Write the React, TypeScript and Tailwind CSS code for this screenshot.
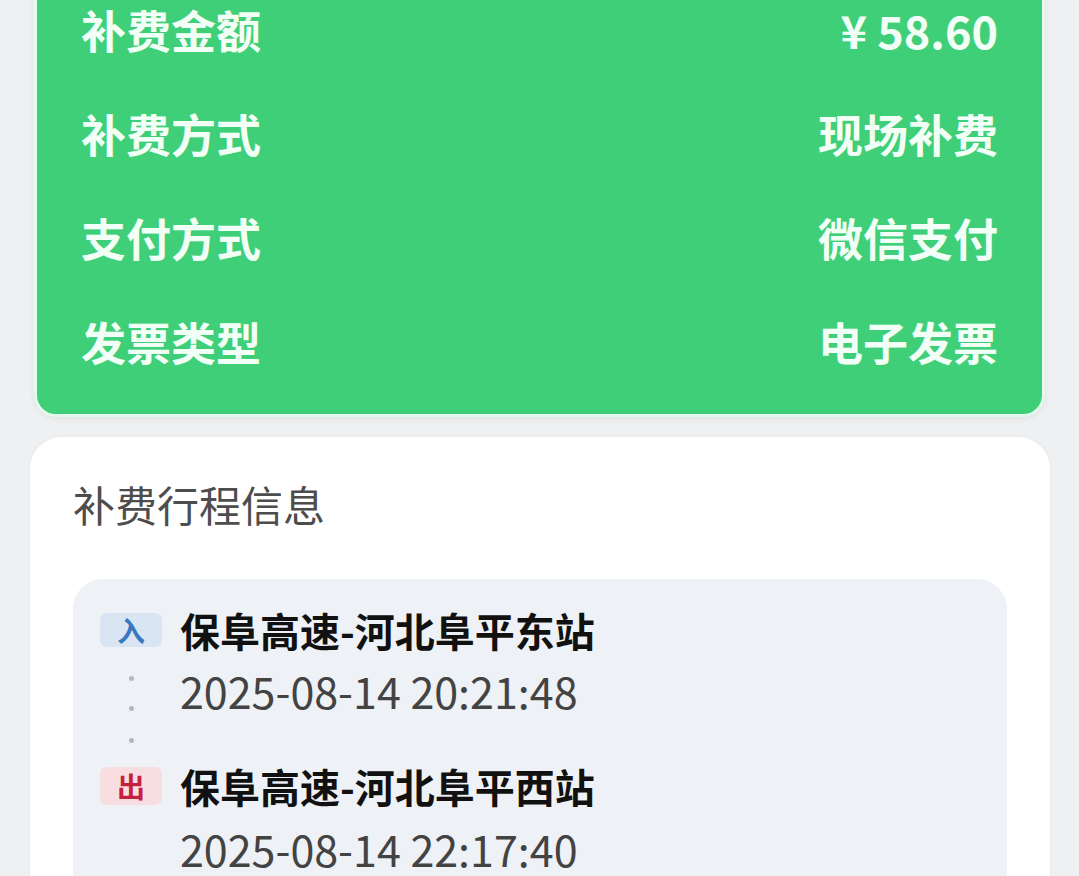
import React from "react";

const cjk = { fontFamily: '"Noto Sans CJK SC", "Noto Sans", sans-serif' };

const rows = [
  { label: "补费金额", value: "¥ 58.60" },
  { label: "补费方式", value: "现场补费" },
  { label: "支付方式", value: "微信支付" },
  { label: "发票类型", value: "电子发票" },
];

function Dot() {
  return <div className="w-[5px] h-[5px] rounded-full bg-[#b4b8bd]" />;
}

export default function App() {
  return (
    <div className="min-h-screen bg-[#eef0f2] overflow-hidden" style={cjk}>
      <div className="mx-[34px] -mt-[60px] pt-[34px] pb-[21px] px-[44px] bg-[#3fcf79] rounded-[22px] border-[3px] border-[#e4f8ee] shadow-[0_2px_6px_rgba(0,0,0,0.06)]">
        {rows.map((r) => (
          <div key={r.label} className="h-[104px] flex items-center justify-between text-[45px] font-bold text-[#f2fff6] leading-none">
            <span>{r.label}</span>
            <span>{r.value}</span>
          </div>
        ))}
      </div>

      <div className="mt-[20px] ml-[30px] mr-[29px] bg-white rounded-[32px] pt-[37px] px-[43px] pb-[40px] shadow-[0_0_4px_rgba(0,0,0,0.04)]">
        <div className="h-[60px] flex items-center text-[42px] text-[#4d4d4d] leading-none">补费行程信息</div>

        <div className="mt-[45px] bg-[#eef1f5] rounded-[30px] pt-[21px] pl-[27px] pr-[30px] pb-[30px]">
          <div className="flex items-center h-[60px]">
            <div className="w-[62px] h-[34px] rounded-[7px] bg-[#d9e5f3] flex items-center justify-center text-[28px] font-semibold text-[#3a78c2] leading-none">入</div>
            <div className="ml-[18px] text-[40px] font-bold text-[#111] leading-none">保阜高速-河北阜平东站</div>
          </div>
          <div className="flex items-center h-[60px]">
            <div className="w-[62px] h-[60px] flex flex-col items-center pt-[16px] gap-[25px]">
              <Dot />
              <Dot />
            </div>
            <div className="ml-[18px] text-[43px] text-[#434343] leading-none">2025-08-14 20:21:48</div>
          </div>
          <div className="flex h-[36px]">
            <div className="w-[62px] flex justify-center pt-[18px]">
              <Dot />
            </div>
          </div>
          <div className="flex items-center h-[60px]">
            <div className="w-[62px] h-[38px] rounded-[7px] bg-[#f8dde1] flex items-center justify-center text-[28px] font-semibold text-[#c4213f] leading-none">出</div>
            <div className="ml-[18px] text-[40px] font-bold text-[#111] leading-none">保阜高速-河北阜平西站</div>
          </div>
          <div className="flex items-center h-[60px] mt-[2px]">
            <div className="w-[62px]" />
            <div className="ml-[18px] text-[43px] text-[#434343] leading-none">2025-08-14 22:17:40</div>
          </div>
        </div>
      </div>
    </div>
  );
}
